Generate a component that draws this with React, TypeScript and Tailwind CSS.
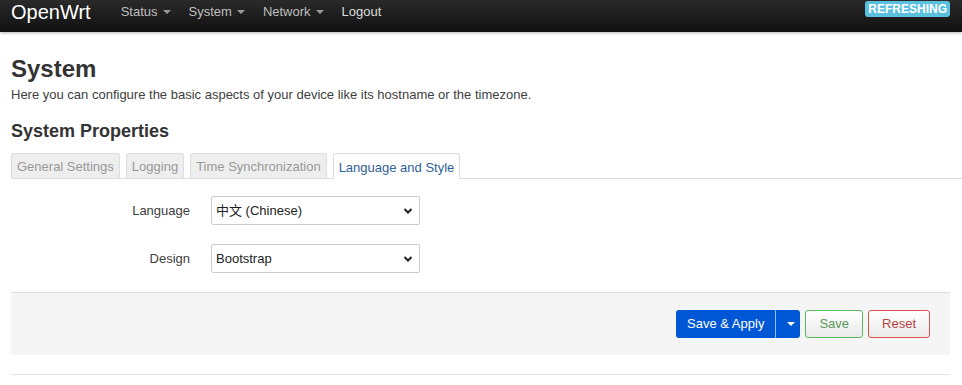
import React from 'react';

const navItems = ['Status', 'System', 'Network'];

const tabs = ['General Settings', 'Logging', 'Time Synchronization'];

function Caret({ className = '' }: { className?: string }) {
  return <span className={`ml-[5px] inline-block h-0 w-0 border-x-[4px] border-t-[4px] border-x-transparent align-middle ${className}`} />;
}

function Field({ label, value }: { label: string; value: string }) {
  return (
    <div className="flex items-center h-[29px]">
      <label className="w-[188px] text-right pr-[9px] text-[13px] text-[#404040]">{label}</label>
      <div className="ml-[12px] flex h-[29px] w-[209px] items-center justify-between rounded-[2px] border border-[#ccc] bg-white pl-[4px] pr-[6px] text-[13px] text-[#222]">
        <span>{value}</span>
        <svg width="10" height="8" viewBox="0 0 10 8">
          <path d="M1.5 2 L5 5.5 L8.5 2" fill="none" stroke="#222" strokeWidth="2" />
        </svg>
      </div>
    </div>
  );
}

export default function App() {
  return (
    <div className="h-[385px] w-[962px] overflow-hidden bg-white font-['Liberation_Sans','Noto_Sans_CJK_SC',sans-serif] text-[#404040]">
      {/* top bar */}
      <div className="flex h-[32px] items-start bg-gradient-to-b from-[#2a2a2a] to-[#111] pl-[11px] pr-[12px] shadow-[0_1px_3px_rgba(0,0,0,0.3)]">
        <span className="pt-[1px] text-[20px] leading-[22px] text-white">OpenWrt</span>
        <nav className="ml-[30px] flex items-center gap-[18px] pt-[3px] text-[13px] leading-[17px] text-[#bfbfbf]">
          {navItems.map((n) => (
            <span key={n} className="flex items-center">
              {n}
              <Caret className="border-t-[#999]" />
            </span>
          ))}
          <span className="text-[#ddd]">Logout</span>
        </nav>
        <span className="ml-auto mt-[1px] rounded-[3px] bg-[#5bc0de] px-[3px] text-[12px] font-bold leading-[16px] text-white">REFRESHING</span>
      </div>

      <div className="pl-[11px] pr-[12px]">
        <h2 className="mt-[22px] text-[24px] font-bold leading-[30px] text-[#333]">System</h2>
        <p className="mt-[3px] text-[13px] leading-[16px] text-[#404040]">
          Here you can configure the basic aspects of your device like its hostname or the timezone.
        </p>
        <h3 className="mt-[17px] text-[18px] font-bold leading-[22px] text-[#333]">System Properties</h3>

        <div className="mt-[11px] flex gap-[6px] border-b border-[#ddd] -mr-[12px]">
          {tabs.map((t) => (
            <span key={t} className="rounded-t-[3px] border border-b-0 border-[#ddd] bg-[#eee] px-[5px] pt-[4px] pb-[2px] text-[13px] leading-[18px] text-[#999]">
              {t}
            </span>
          ))}
          <span className="-mb-px rounded-t-[3px] border border-b-0 border-[#ddd] bg-white px-[5px] pt-[4px] pb-[2px] text-[13px] leading-[19px] text-[#2e5f96]">
            Language and Style
          </span>
        </div>

        <div className="mt-[17px] flex flex-col gap-[19px]">
          <Field label="Language" value="中文 (Chinese)" />
          <Field label="Design" value="Bootstrap" />
        </div>

        <div className="mt-[19px] flex h-[63px] items-center justify-end gap-[5px] border-t border-[#ddd] bg-[#f5f5f5] pr-[20px]">
          <div className="flex h-[28px] overflow-hidden rounded-[3px] bg-[#0057d6] text-[13px] text-white">
            <span className="flex items-center px-[11px]">Save &amp; Apply</span>
            <span className="flex w-[25px] items-center justify-center border-l border-[#9bbcec]">
              <Caret className="ml-0 border-x-[3px] border-t-[3px] border-t-white" />
            </span>
          </div>
          <span className="flex h-[28px] items-center rounded-[3px] border border-[#5cb85c] bg-gradient-to-b from-white to-[#eaeaea] px-[13px] text-[13px] text-[#5a9a5a]">
            Save
          </span>
          <span className="flex h-[28px] items-center rounded-[3px] border border-[#d9534f] bg-gradient-to-b from-white to-[#eaeaea] px-[13px] text-[13px] text-[#b44]">
            Reset
          </span>
        </div>

        <div className="mt-[19px] border-t border-[#e5e5e5]" />
      </div>
    </div>
  );
}
